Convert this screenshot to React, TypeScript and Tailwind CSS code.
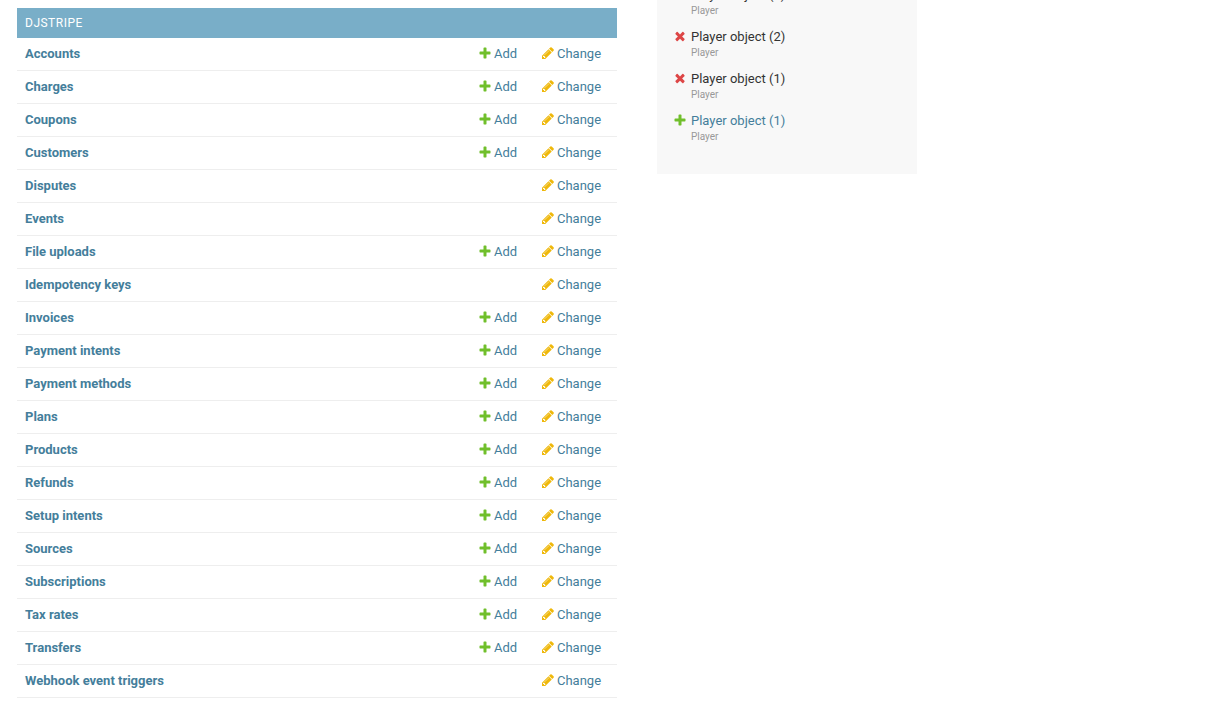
import type { ReactNode } from "react";

const models: { name: string; add: boolean }[] = [
  { name: "Accounts", add: true },
  { name: "Charges", add: true },
  { name: "Coupons", add: true },
  { name: "Customers", add: true },
  { name: "Disputes", add: false },
  { name: "Events", add: false },
  { name: "File uploads", add: true },
  { name: "Idempotency keys", add: false },
  { name: "Invoices", add: true },
  { name: "Payment intents", add: true },
  { name: "Payment methods", add: true },
  { name: "Plans", add: true },
  { name: "Products", add: true },
  { name: "Refunds", add: true },
  { name: "Setup intents", add: true },
  { name: "Sources", add: true },
  { name: "Subscriptions", add: true },
  { name: "Tax rates", add: true },
  { name: "Transfers", add: true },
  { name: "Webhook event triggers", add: false },
];

const actions: { label: string; kind: "add" | "delete" }[] = [
  { label: "Player object (3)", kind: "delete" },
  { label: "Player object (2)", kind: "delete" },
  { label: "Player object (1)", kind: "delete" },
  { label: "Player object (1)", kind: "add" },
];

function Icon({ children }: { children: ReactNode }) {
  return (
    <svg width="14" height="14" viewBox="0 0 1792 1792" className="mt-[-3px] shrink-0">
      {children}
    </svg>
  );
}

function AddIcon() {
  return (
    <Icon>
      <path
        fill="#70bf2b"
        d="M1600 796v192q0 40-28 68t-68 28h-416v416q0 40-28 68t-68 28h-192q-40 0-68-28t-28-68v-416h-416q-40 0-68-28t-28-68v-192q0-40 28-68t68-28h416v-416q0-40 28-68t68-28h192q40 0 68 28t28 68v416h416q40 0 68 28t28 68z"
      />
    </Icon>
  );
}

function ChangeIcon() {
  return (
    <Icon>
      <path
        fill="#efb80b"
        d="M491 1536l91-91-235-235-91 91v107h128v128h107zm523-928q0-22-22-22-10 0-17 7l-542 542q-7 7-7 17 0 22 22 22 10 0 17-7l542-542q7-7 7-17zm-54-192l416 416-832 832h-416v-416zm683 96q0 53-37 90l-166 166-416-416 166-165q36-38 90-38 53 0 91 38l235 234q37 39 37 91z"
      />
    </Icon>
  );
}

function DeleteIcon() {
  return (
    <Icon>
      <path
        fill="#dd4646"
        d="M1490 1322q0 40-28 68l-136 136q-28 28-68 28t-68-28l-294-294-294 294q-28 28-68 28t-68-28l-136-136q-28-28-28-68t28-68l294-294-294-294q-28-28-28-68t28-68l136-136q28-28 68-28t68 28l294 294 294-294q28-28 68-28t68 28l136 136q28 28 28 68t-28 68l-294 294 294 294q28 28 28 68z"
      />
    </Icon>
  );
}

export default function App() {
  return (
    <div className="flex h-[707px] overflow-hidden bg-white pl-[17px] font-['Roboto',sans-serif] text-[13px] leading-4">
      {/* App list */}
      <div className="mt-2 w-[600px] shrink-0">
        <div className="flex h-[30px] items-center bg-[#79aec8] px-2 text-xs font-normal tracking-[0.5px] text-white">
          DJSTRIPE
        </div>
        {models.map((m) => (
          <div key={m.name} className="flex h-[33px] items-center border-b border-[#eeeeee] pl-2 text-[#447e9b]">
            <span className="flex-1 font-bold">{m.name}</span>
            {m.add && (
              <span className="flex w-[63px] items-center gap-[2px]">
                <AddIcon />
                Add
              </span>
            )}
            <span className="mr-4 flex w-[60px] items-center gap-[2px]">
              <ChangeIcon />
              Change
            </span>
          </div>
        ))}
      </div>

      {/* Recent actions */}
      <div className="mt-[-200px] ml-10 h-[374px] w-[260px] shrink-0 bg-[#f8f8f8] pt-[187px] pl-[17px]">
        {actions.map((a, i) => (
          <div key={i} className="mb-[10px] h-8">
            <div className="-ml-px flex items-center gap-1">
              {a.kind === "add" ? <AddIcon /> : <DeleteIcon />}
              <span className={a.kind === "add" ? "text-[#447e9b]" : "text-[#333333]"}>{a.label}</span>
            </div>
            <div className="mt-[1px] pl-[17px] text-[10px] leading-[14px] text-[#999999]">Player</div>
          </div>
        ))}
      </div>
    </div>
  );
}
